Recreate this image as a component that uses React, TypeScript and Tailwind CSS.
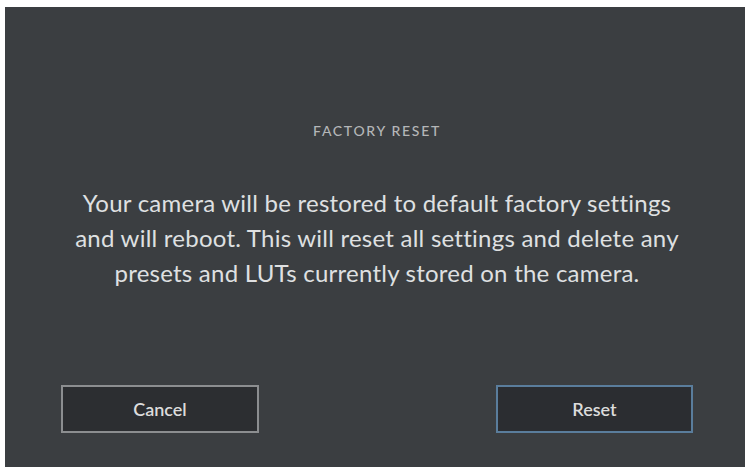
const FactoryReset = () => {
  return (
    <div className="h-[470px] w-[751px] bg-white pl-[5px] pt-[7px]">
      <div
        className="flex h-[460px] w-[740px] flex-col bg-[#3b3e41] pt-[116px] pb-[34px] pl-[56px] pr-[52px]"
        style={{ fontFamily: 'Lato, "Open Sans", sans-serif' }}
      >
        <h1 className="text-center text-[14px] leading-[16px] font-medium tracking-[0.12em] text-[#b4b6b8]">
          FACTORY RESET
        </h1>
        <p className="-mx-[20px] mt-[46px] text-center text-[24px] leading-[35px] tracking-[0.01em] text-[#dfe0e1]">
          Your camera will be restored to default factory settings
          <br />
          and will reboot. This will reset all settings and delete any
          <br />
          presets and LUTs currently stored on the camera.
        </p>

        <div className="mt-auto flex items-center justify-between">
          <button
            type="button"
            className="h-[48px] w-[198px] border-2 border-[#8c8e90] bg-[#2c2e31] text-[18px] font-semibold text-[#dcdcdc]"
          >
            Cancel
          </button>
          <button
            type="button"
            className="h-[48px] w-[197px] border-2 border-[#5a7d9c] bg-[#2b2d31] text-[18px] font-semibold text-[#dcdcdc]"
          >
            Reset
          </button>
        </div>
      </div>
    </div>
  );
};

export default function App() {
  return <FactoryReset />;
}
